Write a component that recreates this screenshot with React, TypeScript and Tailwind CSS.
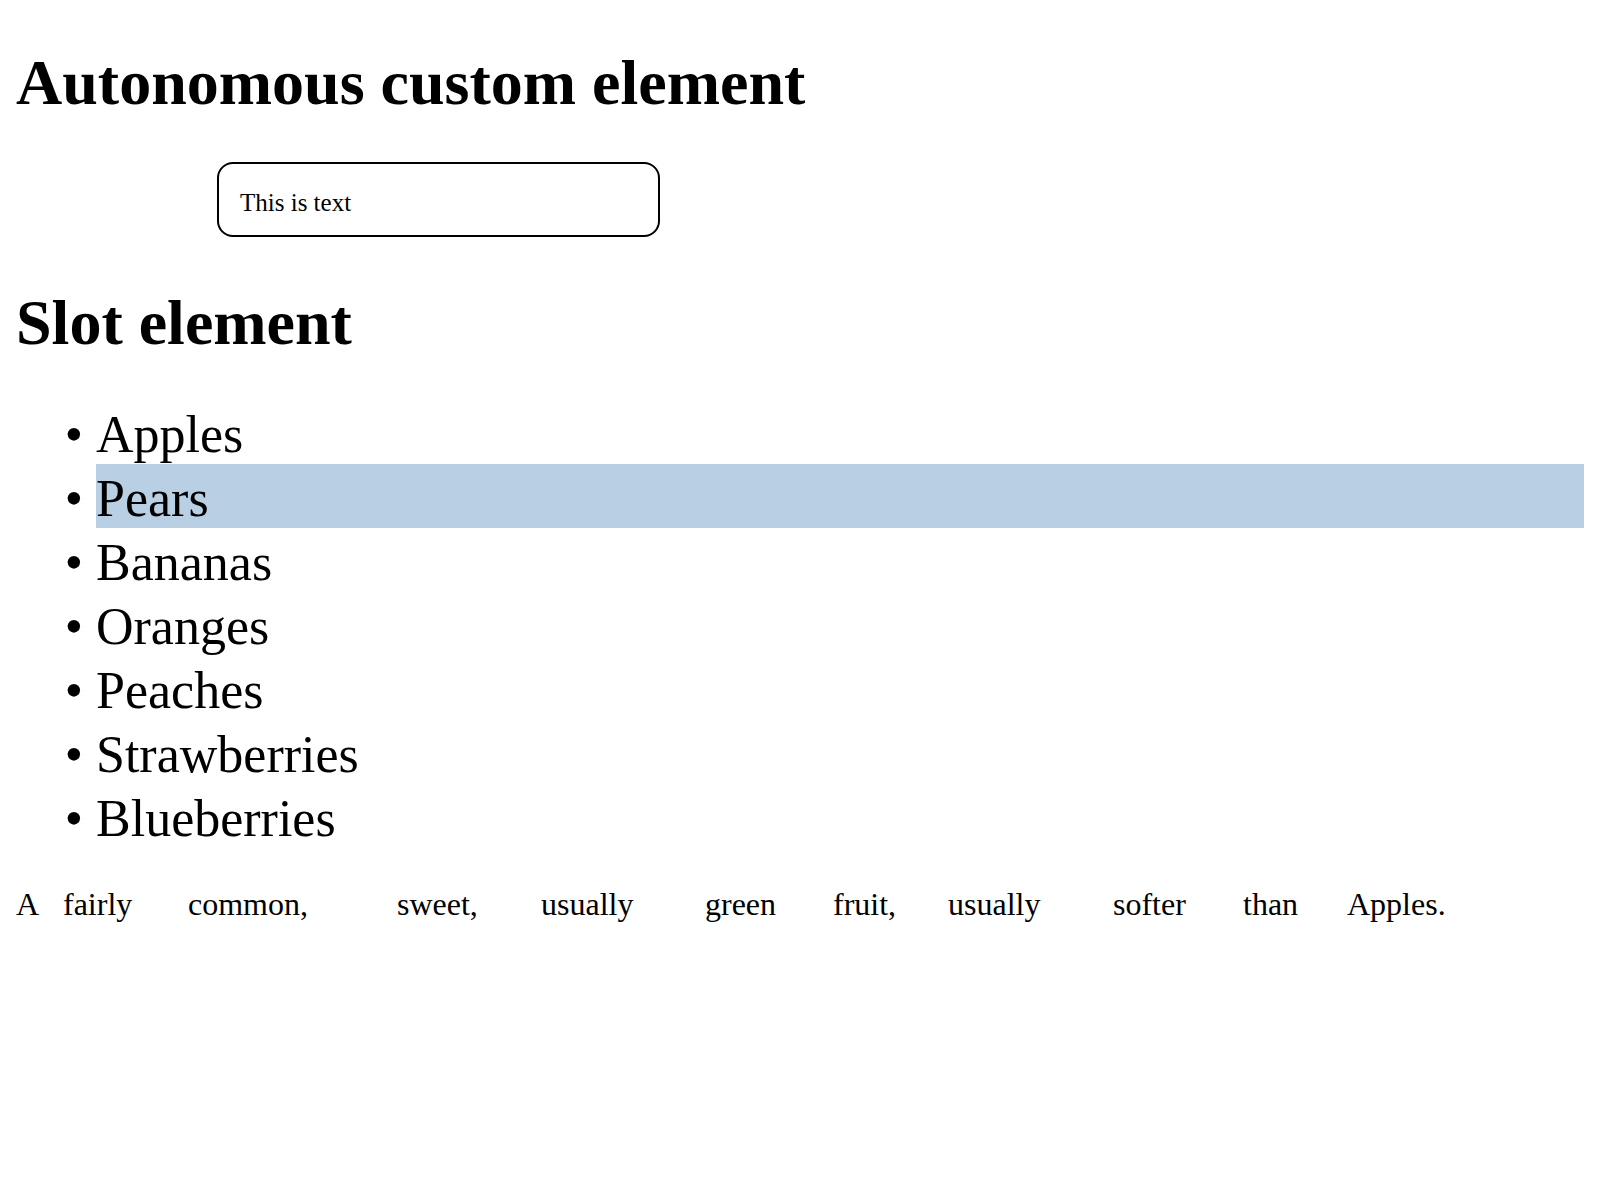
const fruits = ["Apples", "Pears", "Bananas", "Oranges", "Peaches", "Strawberries", "Blueberries"];

// word slots measured from the reference, each holds one word
const words: { text: string; w: string }[] = [
  { text: "A", w: "w-[47px]" },
  { text: "fairly", w: "w-[125px]" },
  { text: "common,", w: "w-[209px]" },
  { text: "sweet,", w: "w-[144px]" },
  { text: "usually", w: "w-[164px]" },
  { text: "green", w: "w-[128px]" },
  { text: "fruit,", w: "w-[115px]" },
  { text: "usually", w: "w-[165px]" },
  { text: "softer", w: "w-[130px]" },
  { text: "than", w: "w-[104px]" },
  { text: "Apples.", w: "w-auto" },
];

export default function App() {
  return (
    <div className="min-h-screen bg-white px-4 pt-4 font-['Liberation_Serif',serif] text-black">
      <h1 className="mt-[35px] text-[64px] leading-[64px] font-bold">Autonomous custom element</h1>

      {/* custom element box */}
      <div className="mt-[47px] ml-[201px] h-[75px] w-[443px] rounded-[16px] border-2 border-black pl-[21px] pt-[25px] text-[25px] leading-[28px]">
        This is text
      </div>

      <h2 className="mt-[54px] text-[64px] leading-[64px] font-bold">Slot element</h2>

      <ul className="mt-[45px] list-['•_'] pl-[80px] text-[52px]">
        {fruits.map((f) => (
          <li key={f} className={`h-[64px] pt-[6px] leading-[58px] ${f === "Pears" ? "bg-[#b9d0e4]" : ""}`}>
            {f}
          </li>
        ))}
      </ul>

      <p className="mt-[38px] flex text-[32px] leading-[37px] whitespace-nowrap">
        {words.map((word, i) => (
          <span key={i} className={`shrink-0 ${word.w}`}>
            {word.text}
          </span>
        ))}
      </p>
    </div>
  );
}
